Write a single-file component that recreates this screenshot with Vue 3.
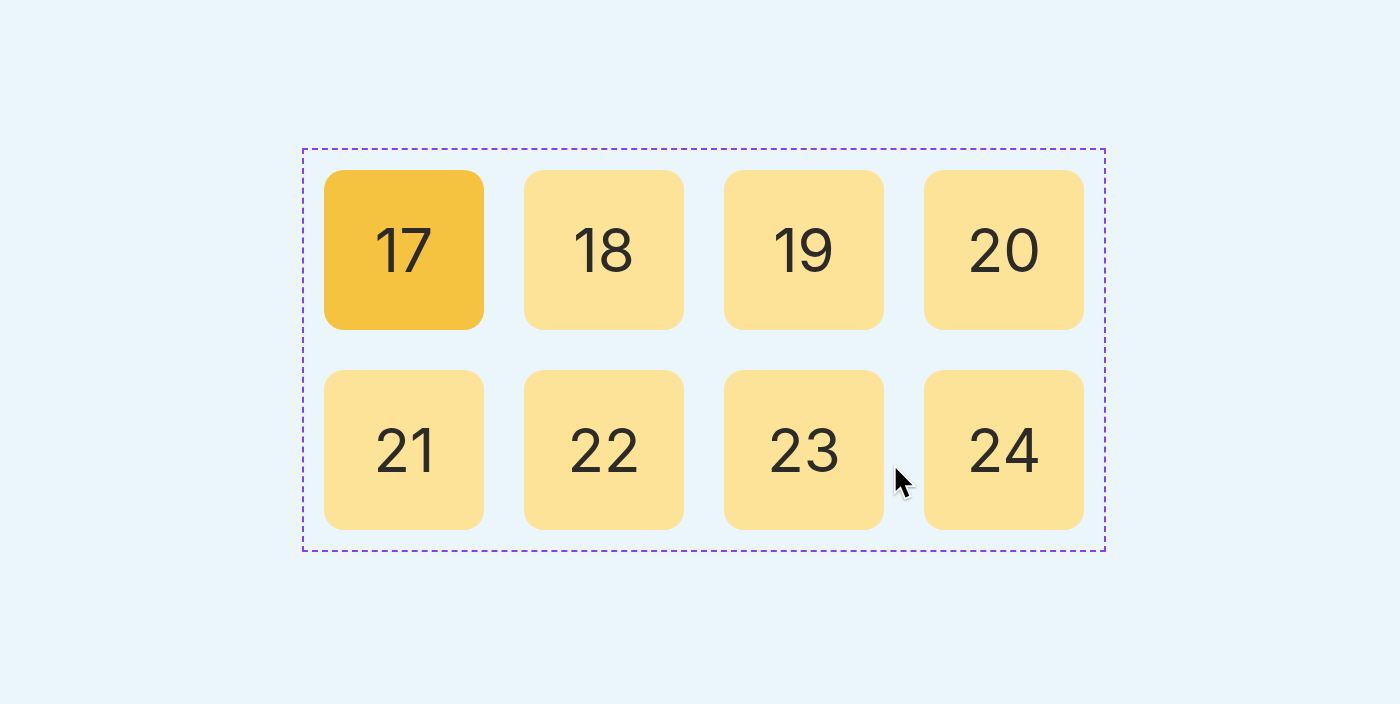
<script setup>
const tiles = [17, 18, 19, 20, 21, 22, 23, 24]
const current = 17
</script>

<template>
  <main class="page">
    <div class="board">
      <div
        v-for="n in tiles"
        :key="n"
        class="tile"
        :class="{ active: n === current }"
      >
        {{ n }}
      </div>
      <svg class="pointer" width="40" height="56" viewBox="0 0 40 56" aria-hidden="true">
        <path
          d="M10.7 13V36L15.8 31.2L20.5 42.4L24.3 40.8L19.8 30.2H27.6Z"
          fill="#000"
          stroke="#fff"
          stroke-width="3.4"
          stroke-linejoin="miter"
          stroke-miterlimit="3"
          paint-order="stroke"
        />
      </svg>
    </div>
  </main>
</template>

<style>
body {
  margin: 0;
  background: #eaf5fc;
}
</style>

<style scoped>
.page {
  box-sizing: border-box;
  min-height: 100vh;
  padding: 0 0 4px 8px;
  display: flex;
  align-items: center;
  justify-content: center;
  font-family: Inter, "Liberation Sans", sans-serif;
  color: #2d2b28;
}

.board {
  position: relative;
  display: grid;
  grid-template-columns: repeat(4, 160px);
  gap: 40px;
  padding: 20px;
  border: 2px dashed #8540f0;
}

.tile {
  display: flex;
  align-items: center;
  justify-content: center;
  aspect-ratio: 1;
  border-radius: 20px;
  background: #fce398;
  font-size: 60px;
  line-height: 72px;
}

.tile.active {
  background: #f5c33f;
}

.pointer {
  position: absolute;
  left: 581px;
  top: 305px;
  filter: drop-shadow(0 1px 1px rgba(0, 0, 0, 0.35));
}
</style>
